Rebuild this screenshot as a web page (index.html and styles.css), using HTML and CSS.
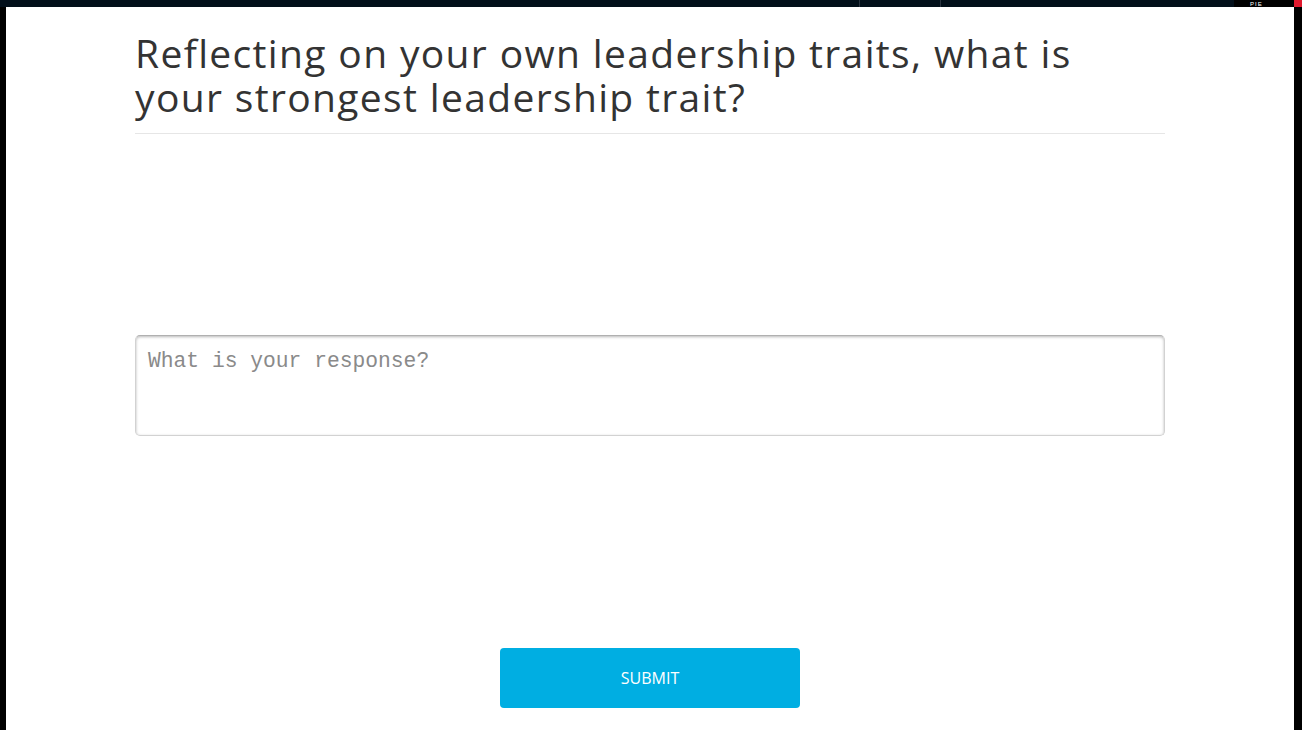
FILE: index.html
```html
<!DOCTYPE html>
<html lang="en">
<head>
<meta charset="utf-8">
<title>Reflection</title>
<link rel="stylesheet" href="styles.css">
</head>
<body>
<div class="topbar">
  <div class="seg seg-a"></div>
  <div class="seg seg-b"></div>
  <div class="seg seg-c"></div>
  <div class="seg seg-d"><span class="tiny">PIE</span></div>
  <div class="seg seg-red"></div>
</div>
<div class="frame">
  <div class="side side-left"></div>
  <main class="content">
    <div class="column">
      <h1 class="question">Reflecting on your own leadership traits, what is your strongest leadership trait?</h1>
      <textarea class="response" placeholder="What is your response?"></textarea>
      <button class="submit" type="button">SUBMIT</button>
    </div>
  </main>
  <div class="side side-right"></div>
</div>
</body>
</html>
```

FILE: styles.css
```css
html, body {
  margin: 0;
  padding: 0;
  height: 100%;
  background: #ffffff;
  overflow: hidden;
}

body {
  display: flex;
  flex-direction: column;
  font-family: "Open Sans", "Liberation Sans", sans-serif;
}

.topbar {
  display: flex;
  height: 7px;
  flex: none;
  background: #020f1a;
}

.seg {
  height: 100%;
}

.seg-a {
  width: 860px;
  border-right: 1px solid #2a3440;
  box-sizing: border-box;
}

.seg-b {
  width: 81px;
  border-right: 1px solid #2a3440;
  box-sizing: border-box;
}

.seg-c {
  width: 293px;
}

.seg-d {
  width: 60px;
  background: #000000;
  display: flex;
  align-items: flex-end;
  padding-left: 16px;
  box-sizing: border-box;
  overflow: hidden;
}

.tiny {
  color: #ffffff;
  font-family: "Liberation Sans", sans-serif;
  font-size: 6px;
  line-height: 6px;
  letter-spacing: 1px;
}

.seg-red {
  flex: 1;
  background: #e0182d;
}

.frame {
  flex: 1;
  display: flex;
}

.side {
  flex: none;
  background: #000000;
}

.side-left {
  width: 6px;
}

.side-right {
  width: 8px;
}

.content {
  flex: 1;
  display: flex;
  justify-content: center;
}

.column {
  width: 1030px;
  display: flex;
  flex-direction: column;
}

.question {
  margin: 24px 0 0 0;
  padding: 0 50px 14px 0;
  font-family: "Open Sans", "Liberation Sans", sans-serif;
  font-weight: 400;
  font-size: 39px;
  letter-spacing: 1.35px;
  line-height: 44px;
  color: #333333;
  border-bottom: 1px solid #e6e6e6;
}

.response {
  margin-top: 201px;
  height: 101px;
  box-sizing: border-box;
  width: 100%;
  padding: 12px 12px;
  border: 1px solid #d2d2d2;
  border-top-color: #b0b0b0;
  border-radius: 5px;
  box-shadow: inset 0 1px 3px rgba(0, 0, 0, 0.28);
  font-family: "Courier New", "Liberation Mono", monospace;
  font-size: 21.3px;
  line-height: 26px;
  color: #333333;
  resize: none;
  outline: none;
}

.response::placeholder {
  color: #8a8a8a;
}

.submit {
  align-self: center;
  margin-top: 212px;
  width: 300px;
  height: 60px;
  border: none;
  border-radius: 4px;
  background: #00aee2;
  color: #ffffff;
  font-family: "Open Sans", "Liberation Sans", sans-serif;
  font-size: 16px;
  font-weight: 400;
  cursor: pointer;
}
```
